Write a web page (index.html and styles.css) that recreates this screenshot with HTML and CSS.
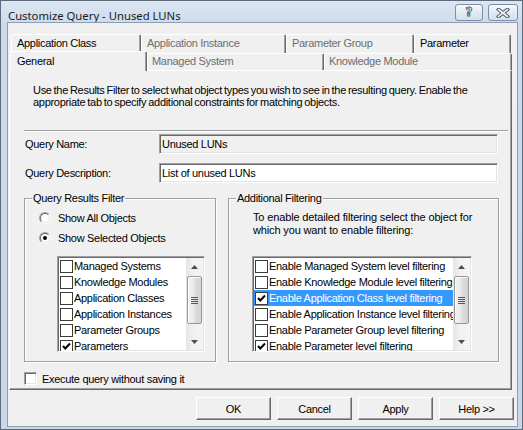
FILE: index.html
```html
<!DOCTYPE html>
<html>
<head>
<meta charset="utf-8">
<title>Customize Query - Unused LUNs</title>
<link rel="stylesheet" href="styles.css">
</head>
<body>
<div class="window">
  <div class="titlebar">
    <span class="title">Customize Query - Unused LUNs</span>
    <div class="tb-buttons">
      <span class="tb-btn help">?</span>
      <span class="tb-btn close">
        <svg width="14" height="10" viewBox="0 0 14 10"><path d="M2.5 1.5 L11.5 8.5 M11.5 1.5 L2.5 8.5" stroke="#4a586c" stroke-width="3.6" stroke-linecap="square" fill="none"/><path d="M2.5 1.5 L11.5 8.5 M11.5 1.5 L2.5 8.5" stroke="#f4f7fa" stroke-width="1.6" stroke-linecap="square" fill="none"/></svg>
      </span>
    </div>
  </div>
  <div class="client">
    <div class="tabs">
      <div class="tab-row row1">
        <div class="tab w-appclass">Application Class</div>
        <div class="tab disabled w-appinst">Application Instance</div>
        <div class="tab disabled w-pgroup">Parameter Group</div>
        <div class="tab w-param">Parameter</div>
      </div>
      <div class="tab-row row2">
        <div class="tab selected w-general">General</div>
        <div class="tab disabled w-managed">Managed System</div>
        <div class="tab disabled w-km">Knowledge Module</div>
      </div>
    </div>
    <div class="panel">
      <p class="intro">Use the Results Filter to select what object types you wish to see in the resulting query. Enable the<br>appropriate tab to specify additional constraints for matching objects.</p>
      <div class="separator"></div>
      <div class="field">
        <span class="label">Query Name:</span>
        <div class="input readonly">Unused LUNs</div>
      </div>
      <div class="field">
        <span class="label">Query Description:</span>
        <div class="input">List of unused LUNs</div>
      </div>
      <div class="groups">
        <fieldset class="group group-left">
          <legend>Query Results Filter</legend>
          <div class="group-body body-left">
            <div class="radio-row first"><span class="radio"><span class="radio-in"></span></span><span>Show All Objects</span></div>
            <div class="radio-row"><span class="radio"><span class="radio-in"><span class="dot"></span></span></span><span>Show Selected Objects</span></div>
            <div class="list list-left">
              <div class="items">
                <div class="item"><span class="cb"></span><span class="txt">Managed Systems</span></div>
                <div class="item"><span class="cb"></span><span class="txt">Knowledge Modules</span></div>
                <div class="item"><span class="cb"></span><span class="txt">Application Classes</span></div>
                <div class="item"><span class="cb"></span><span class="txt">Application Instances</span></div>
                <div class="item"><span class="cb"></span><span class="txt">Parameter Groups</span></div>
                <div class="item"><span class="cb"><svg width="11" height="11" viewBox="0 0 11 11"><polyline points="2,5 4.3,7.5 9,2.5" fill="none" stroke="#000" stroke-width="2"/></svg></span><span class="txt">Parameters</span></div>
              </div>
              <div class="sb">
                <div class="sb-btn"><svg width="7" height="4" viewBox="0 0 7 4"><polygon points="3.5,0 7,4 0,4" fill="#4d4d4d"/></svg></div>
                <div class="sb-thumb"><svg width="7" height="7" viewBox="0 0 7 7"><path d="M0 0.5H7M0 2.5H7M0 4.5H7M0 6.5H7" stroke="#5a5a5a" stroke-width="1"/></svg></div>
                <div class="sb-track"></div>
                <div class="sb-btn"><svg width="7" height="4" viewBox="0 0 7 4"><polygon points="0,0 7,0 3.5,4" fill="#4d4d4d"/></svg></div>
              </div>
            </div>
          </div>
        </fieldset>
        <fieldset class="group group-right">
          <legend>Additional Filtering</legend>
          <div class="group-body body-right">
            <p class="group-desc">To enable detailed filtering select the object for<br>which you want to enable filtering:</p>
            <div class="list list-right">
              <div class="items">
                <div class="item"><span class="cb"></span><span class="txt">Enable Managed System level filtering</span></div>
                <div class="item"><span class="cb"></span><span class="txt">Enable Knowledge Module level filtering</span></div>
                <div class="item selected"><span class="cb"><svg width="11" height="11" viewBox="0 0 11 11"><polyline points="2,5 4.3,7.5 9,2.5" fill="none" stroke="#000" stroke-width="2"/></svg></span><span class="txt">Enable Application Class level filtering</span></div>
                <div class="item"><span class="cb"></span><span class="txt">Enable Application Instance level filtering</span></div>
                <div class="item"><span class="cb"></span><span class="txt">Enable Parameter Group level filtering</span></div>
                <div class="item"><span class="cb"><svg width="11" height="11" viewBox="0 0 11 11"><polyline points="2,5 4.3,7.5 9,2.5" fill="none" stroke="#000" stroke-width="2"/></svg></span><span class="txt">Enable Parameter level filtering</span></div>
              </div>
              <div class="sb">
                <div class="sb-btn"><svg width="7" height="4" viewBox="0 0 7 4"><polygon points="3.5,0 7,4 0,4" fill="#4d4d4d"/></svg></div>
                <div class="sb-thumb"><svg width="7" height="7" viewBox="0 0 7 7"><path d="M0 0.5H7M0 2.5H7M0 4.5H7M0 6.5H7" stroke="#5a5a5a" stroke-width="1"/></svg></div>
                <div class="sb-track"></div>
                <div class="sb-btn"><svg width="7" height="4" viewBox="0 0 7 4"><polygon points="0,0 7,0 3.5,4" fill="#4d4d4d"/></svg></div>
              </div>
            </div>
          </div>
        </fieldset>
      </div>
      <div class="exec"><span class="check3d"></span><span>Execute query without saving it</span></div>
    </div>
    <div class="buttons">
      <div class="btn">OK</div>
      <div class="btn">Cancel</div>
      <div class="btn">Apply</div>
      <div class="btn">Help &gt;&gt;</div>
    </div>
  </div>
</div>
</body>
</html>
```
FILE: styles.css
```css
* { box-sizing: border-box; }
body {
  margin: 0;
  font-family: "Liberation Sans", Arial, sans-serif;
  font-size: 11px;
  letter-spacing: -0.3px;
  color: #000;
  background: #f0f0f0;
}
.window {
  width: 523px;
  height: 430px;
  border: 1px solid #5e6b7d;
  background: linear-gradient(#dbe6f3, #cddaea 24px, #c9d7e8);
  display: flex;
  flex-direction: column;
}
.titlebar {
  height: 21px;
  flex: none;
  display: flex;
  align-items: flex-start;
  padding: 0 4px 0 7px;
}
.title {
  font-family: "Noto Sans", "Liberation Sans", sans-serif;
  font-size: 11.3px;
  letter-spacing: 0;
  line-height: 14px;
  margin-top: 8px;
  color: #1b1b1b;
}
.tb-buttons {
  margin-left: auto;
  display: flex;
  gap: 5px;
  margin-top: 3px;
}
.tb-btn {
  height: 17px;
  border: 1px solid #7e8ea4;
  border-radius: 3px;
  background: linear-gradient(#f6f9fc, #e3eaf2 50%, #d6dfea);
  display: flex;
  align-items: center;
  justify-content: center;
}
.help {
  width: 28px;
  font-family: "DejaVu Sans", sans-serif;
  font-weight: bold;
  font-size: 12px;
  letter-spacing: 0;
  color: #f7f9fb;
  -webkit-text-stroke: 0.9px #4f5d71;
  line-height: 15px;
}
.close { width: 30px; }
.client {
  flex: 1;
  margin: 0 4px 2px 6px;
  border: 1px solid #8d9db2;
  background: #f0f0f0;
  display: flex;
  flex-direction: column;
}
/* tabs */
.tabs {
  margin-top: 11px;
  position: relative;
  z-index: 1;
}
.tab-row { display: flex; }
.row1 { margin-left: 3px; height: 19px; }
.row2 { margin-left: 2px; margin-top: -2px; height: 19px; align-items: flex-start; }
.tab {
  height: 19px;
  background: #f0f0f0;
  border-top: 1px solid #fff;
  border-left: 1px solid #fff;
  border-right: 1px solid #696969;
  box-shadow: inset -1px 0 #a0a0a0;
  border-radius: 2px 2px 0 0;
  padding: 2px 0 0 5px;
  line-height: 13px;
  white-space: nowrap;
  overflow: hidden;
}
.tab.disabled { color: #6d6d6d; }
.row2 .tab { margin-top: 2px; height: 17px; padding-top: 1px; padding-left: 4px; }
.row2 .tab.selected { margin-top: 0; height: 20px; padding-top: 3px; padding-left: 6px; }
.w-appclass { width: 130px; }
.w-appinst { width: 145px; }
.w-pgroup { width: 128px; }
.w-param { width: 97px; }
.w-general { width: 137px; }
.w-managed { width: 177px; }
.w-km { width: 188px; }
/* panel */
.panel {
  margin-left: 1px;
  width: 503px;
  height: 320px;
  flex: none;
  border-top: 1px solid #fff;
  border-left: 1px solid #fff;
  border-right: 1px solid #696969;
  border-bottom: 1px solid #696969;
  box-shadow: inset -1px -1px #a0a0a0;
  padding: 13px 2px 0 14px;
  display: flex;
  flex-direction: column;
}
.intro {
  margin: 0 0 0 9px;
  line-height: 12px;
  word-spacing: -0.8px;
  white-space: nowrap;
}
.separator {
  margin-top: 22px;
  width: 484px;
  height: 2px;
  border-top: 1px solid #a0a0a0;
  border-bottom: 1px solid #fff;
}
.field {
  display: flex;
  align-items: center;
  height: 20px;
  margin-top: 2px;
}
.field + .field { margin-top: 9px; }
.label { width: 135px; padding-left: 1px; }
.input {
  width: 339px;
  height: 20px;
  border: 1px solid;
  border-color: #a0a0a0 #fff #fff #a0a0a0;
  box-shadow: inset 1px 1px #696969, inset -1px -1px #e3e3e3;
  background: #fff;
  padding-left: 2px;
  line-height: 18px;
  white-space: nowrap;
}
.input.readonly { background: #f0f0f0; }
/* groups */
.groups {
  display: flex;
  gap: 12px;
  margin-top: 9px;
}
.group {
  margin: 0;
  padding: 0;
  min-width: 0;
  border: 1px solid #a0a0a0;
  box-shadow: inset 1px 1px #fff, 1px 1px #fff;
}
.group legend {
  margin-left: 7px;
  padding: 0 1px;
  line-height: 13px;
  background: #f0f0f0;
}
.group-left { width: 192px; }
.group-right { width: 271px; }
.group-body { padding-bottom: 9px; }
.body-left { padding-left: 14px; }
.body-right { padding-left: 23px; }
.radio-row {
  display: flex;
  align-items: center;
  gap: 7px;
  height: 20px;
}
.radio-row.first { margin-top: 3px; }
.radio {
  width: 12px;
  height: 12px;
  flex: none;
  border-radius: 50%;
  border: 1px solid;
  border-color: #a0a0a0 #fff #fff #a0a0a0;
  display: flex;
}
.radio-in {
  flex: 1;
  border-radius: 50%;
  border: 1px solid;
  border-color: #696969 #e3e3e3 #e3e3e3 #696969;
  background: #fff;
  display: flex;
  align-items: center;
  justify-content: center;
}
.dot {
  width: 4px;
  height: 4px;
  border-radius: 50%;
  background: #000;
}
.group-desc {
  margin: 6px 0 0 1px;
  line-height: 13px;
  letter-spacing: -0.14px;
  white-space: nowrap;
}
/* list boxes */
.list {
  display: flex;
  height: 96px;
  border: 1px solid;
  border-color: #a0a0a0 #fff #fff #a0a0a0;
  box-shadow: inset 1px 1px #696969, inset -1px -1px #e3e3e3;
  background: #fff;
  padding: 1px 1px 0 1px;
}
.list-left { width: 148px; margin: 8px 0 0 18px; }
.list-right { width: 220px; margin-top: 19px; }
.items {
  flex: 1;
  min-width: 0;
  overflow: hidden;
}
.item {
  height: 16px;
  display: flex;
  align-items: center;
  white-space: nowrap;
}
.item.selected { background: #3399ff; color: #fff; }
.cb {
  width: 13px;
  height: 13px;
  flex: none;
  margin-left: 1px;
  border: 1px solid #3c3c3c;
  background: #fff;
  display: flex;
}
.txt { padding-left: 1px; line-height: 15px; }
.sb {
  width: 17px;
  flex: none;
  display: flex;
  flex-direction: column;
  margin-bottom: 1px;
  background: linear-gradient(to right, #e4e4e4, #f1f1f1 40%, #f4f4f4);
}
.sb-btn {
  height: 17px;
  flex: none;
  display: flex;
  align-items: center;
  justify-content: center;
}
.sb-thumb {
  height: 48px;
  flex: none;
  margin: 1px 1px 0 1px;
  border: 1px solid #979797;
  border-radius: 2px;
  background: linear-gradient(to right, #f4f4f4, #e9e9e9 45%, #dcdcdc 55%, #d3d3d3);
  box-shadow: inset 1px 1px #fcfcfc;
  display: flex;
  align-items: center;
  justify-content: center;
}
.sb-track { flex: 1; }
/* execute checkbox */
.exec {
  display: flex;
  align-items: center;
  gap: 5px;
  margin-top: 10px;
  height: 13px;
}
.check3d {
  width: 13px;
  height: 13px;
  flex: none;
  border: 1px solid;
  border-color: #a0a0a0 #fff #fff #a0a0a0;
  box-shadow: inset 1px 1px #696969, inset -1px -1px #e3e3e3;
  background: #fff;
}
/* buttons */
.buttons {
  display: flex;
  justify-content: flex-end;
  gap: 6px;
  margin-top: 7px;
  padding-right: 3px;
}
.btn {
  width: 75px;
  height: 23px;
  border-top: 1px solid #fff;
  border-left: 1px solid #fff;
  border-right: 1px solid #696969;
  border-bottom: 1px solid #696969;
  box-shadow: inset -1px -1px #a0a0a0;
  background: #f0f0f0;
  display: flex;
  align-items: center;
  justify-content: center;
}
```
